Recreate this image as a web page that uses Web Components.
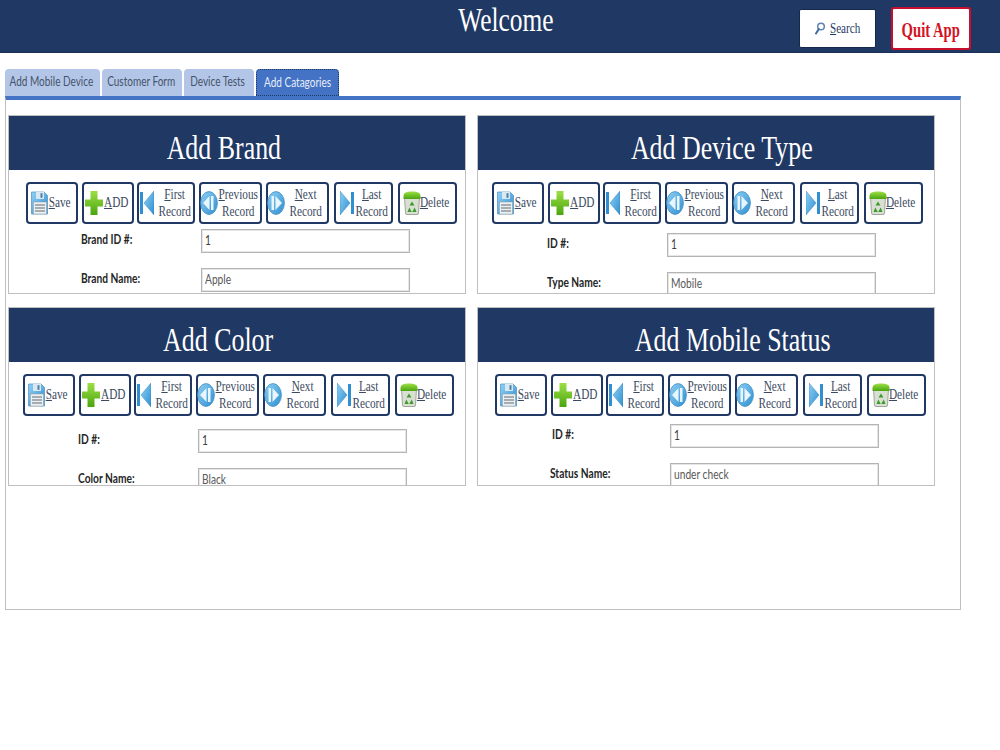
<!DOCTYPE html>
<html>
<head>
<meta charset="utf-8">
<title>Welcome</title>
<style>
  html, body { margin: 0; background: #fff; }
</style>
</head>
<body>
<app-shell>
  <app-header slot="header" heading="Welcome"></app-header>
  <tab-strip slot="tabs">
    <tab-item size="95">Add Mobile Device</tab-item>
    <tab-item size="80">Customer Form</tab-item>
    <tab-item size="70">Device Tests</tab-item>
    <tab-item size="83" active>Add Catagories</tab-item>
  </tab-strip>
  <record-card heading="Add Brand" shift="-13" row-left="18" gap="5">
    <form-field left="73" label="Brand ID #:" value="1" strong></form-field>
    <form-field left="73" label="Brand Name:" value="Apple"></form-field>
  </record-card>
  <record-card heading="Add Device Type" shift="16" row-left="15" gap="9">
    <form-field left="70" label="ID #:" value="1" strong></form-field>
    <form-field left="70" label="Type Name:" value="Mobile"></form-field>
  </record-card>
  <record-card heading="Add Color" shift="-19" row-left="15" gap="13">
    <form-field left="70" label="ID #:" value="1" strong></form-field>
    <form-field left="70" label="Color Name:" value="Black"></form-field>
  </record-card>
  <record-card heading="Add Mobile Status" shift="27" row-left="18" gap="8">
    <form-field left="75" label="ID #:" value="1" strong></form-field>
    <form-field left="73" label="Status Name:" value="under check"></form-field>
  </record-card>
</app-shell>

<script>
const DEFS = `<svg width="0" height="0" style="position:absolute"><defs>
    <linearGradient id="sky" x1="0" y1="0" x2="1" y2="1"><stop offset="0" stop-color="#8fd0f5"/><stop offset="1" stop-color="#2f8fd0"/></linearGradient>
    <linearGradient id="leaf" x1="0" y1="0" x2="0" y2="1"><stop offset="0" stop-color="#9ddf45"/><stop offset="1" stop-color="#4aa510"/></linearGradient>
  </defs></svg>`;

const ICONS = {
  save: `<svg width="17" height="24" viewBox="0 0 17 24">
      ${DEFS}
      <path d="M.5 1h12.500l3.500 3.500V23H.5z" fill="url(#sky)" stroke="#4f8fbe" stroke-width=".7"/>
      <rect x="5" y="1" width="8" height="7" fill="#dbe8f2"/>
      <rect x="9.500" y="2.200" width="2" height="4.600" fill="#4d7fa8"/>
      <rect x="2.500" y="11" width="13" height="12" fill="#edf0f2" stroke="#8d99a3" stroke-width=".5"/>
      <path d="M4 14h10M4 17h10M4 20h10" stroke="#5f6a75" stroke-width="1.100"/>
    </svg>`,
  add: `<svg width="18" height="24" viewBox="0 0 18 24">
      ${DEFS}
      <path d="M5.500 0h7v8.500H18v7h-5.500V24h-7v-8.500H0v-7h5.500z" fill="url(#leaf)"/>
    </svg>`,
  first: `<svg width="14" height="24" viewBox="0 0 14 24">
      ${DEFS}
      <rect x="0" y="1" width="3" height="22" fill="#2f8fd0"/>
      <path d="M14 0v24L4 12z" fill="url(#sky)" stroke="#2f86c0" stroke-width=".5"/>
    </svg>`,
  last: `<svg width="14" height="24" viewBox="0 0 14 24">
      ${DEFS}
      <path d="M0 0v24l10-12z" fill="url(#sky)" stroke="#2f86c0" stroke-width=".5"/>
      <rect x="11" y="1" width="3" height="22" fill="#2f8fd0"/>
    </svg>`,
  prev: `<svg width="18" height="24" viewBox="0 0 18 24">
      ${DEFS}
      <ellipse cx="9" cy="12" rx="8.400" ry="11.400" fill="url(#sky)" stroke="#3e8fc7" stroke-width=".8"/>
      <rect x="11" y="5" width="2.500" height="14" fill="#e8f5fc"/>
      <path d="M9.500 5v14L3 12z" fill="#e8f5fc"/>
    </svg>`,
  next: `<svg width="18" height="24" viewBox="0 0 18 24">
      ${DEFS}
      <ellipse cx="9" cy="12" rx="8.400" ry="11.400" fill="url(#sky)" stroke="#3e8fc7" stroke-width=".8"/>
      <rect x="4.500" y="5" width="2.500" height="14" fill="#e8f5fc"/>
      <path d="M8.500 5v14L15 12z" fill="#e8f5fc"/>
    </svg>`,
  trash: `<svg width="18" height="24" viewBox="0 0 18 24">
      ${DEFS}
      <path d="M1.500 6h15L15.500 22a1.500 1.500 0 0 1-1.500 1.500H4A1.500 1.500 0 0 1 2.500 22z" fill="#d9dfd2" stroke="#7d8876" stroke-width=".7"/>
      <path d="M.5 5C.5 1.500 4 .5 9 .5s8.500 1 8.500 4.500v3H.5z" fill="url(#leaf)"/>
      <path d="M9 10.500l-2.500 4h5zM4.500 21l1.800-4.500 2.500 4.500zM13.500 21l-1.800-4.500-2.500 4.500z" fill="#3f9a2c"/>
    </svg>`
};

const BUTTONS = [
  { icon: 'save',  top: 'Save',     width: 52, before: 0, iconAt: 5, iconW: 17, textAt: 34 },
  { icon: 'add',   top: 'ADD',      width: 52, before: 4, iconAt: 3, iconW: 18, textAt: 34 },
  { icon: 'first', top: 'First',    bottom: 'Record', width: 58, before: 3, iconAt: 3, iconW: 14, textAt: 38 },
  { icon: 'prev',  top: 'Previous', bottom: 'Record', width: 63, before: 4, iconAt: 1, iconW: 18, textAt: 39 },
  { icon: 'next',  top: 'Next',     bottom: 'Record', width: 63, before: 4, iconAt: 1, iconW: 18, textAt: 40 },
  { icon: 'last',  top: 'Last',     bottom: 'Record', width: 59, before: 5, iconAt: 6, iconW: 14, textAt: 38 },
  { icon: 'trash', top: 'Delete',   width: 59, before: 5, iconAt: 5, iconW: 18, textAt: 37 }
];

class AppShell extends HTMLElement {
  constructor() {
    super();
    this.attachShadow({ mode: 'open' });
    this.shadowRoot.innerHTML = `
      <style>
        :host { display: block; width: 1000px; height: 750px; overflow: hidden; }
        .tabs { margin: 16px 0 0 5px; }
        .panel {
          margin-left: 5px;
          width: 956px;
          height: 514px;
          box-sizing: border-box;
          border: 1px solid #bfbfbf;
          border-top: 4px solid #4472c4;
          padding: 15px 0 0 2px;
          display: grid;
          grid-template-columns: 458px 458px;
          grid-auto-rows: 179px;
          column-gap: 11px;
          row-gap: 13px;
          align-content: start;
        }
      </style>
      <slot name="header"></slot>
      <div class="tabs"><slot name="tabs"></slot></div>
      <div class="panel"><slot></slot></div>
    `;
  }
}

class AppHeader extends HTMLElement {
  constructor() {
    super();
    this.attachShadow({ mode: 'open' });
    this.shadowRoot.innerHTML = `
      <style>
        :host {
          display: grid;
          grid-template-columns: 784px 77px 80px;
          column-gap: 15px;
          height: 53px;
          box-sizing: border-box;
          background: #1f3864;
          border-bottom: 1px solid #1a2f55;
          font-family: "Liberation Serif", serif;
        }
        h1 {
          margin: 0;
          padding-left: 228px;
          text-align: center;
          font-weight: normal;
          font-size: 33px;
          line-height: 40px;
          color: #fff;
          white-space: nowrap;
        }
        h1 span { display: inline-block; transform: scaleX(.77); }
        .search {
          margin-top: 9px;
          height: 39px;
          box-sizing: border-box;
          background: #fff;
          border: 1px solid #16294b;
          border-radius: 2px;
          display: flex;
          align-items: center;
          padding-left: 15px;
          font-size: 15px;
          color: #1f3864;
        }
        .search svg { flex: none; }
        .search span { display: inline-block; transform: scaleX(.74); transform-origin: left center; margin-left: 5px; white-space: nowrap; }
        .quit {
          margin-top: 7px;
          height: 43px;
          box-sizing: border-box;
          background: #fff;
          border: 2px solid #c8102e;
          border-radius: 3px;
          padding-top: 3px;
          display: flex;
          align-items: center;
          justify-content: center;
          font-size: 21px;
          font-weight: bold;
          color: #d2141f;
          white-space: nowrap;
          overflow: hidden;
        }
        .quit span { display: inline-block; transform: scaleX(.7); flex: none; }
      </style>
      <h1><span>${this.getAttribute('heading')}</span></h1>
      <div class="search">
        <svg width="10" height="13" viewBox="0 0 10 13">
          <circle cx="6" cy="4.500" r="3.300" fill="none" stroke="#5f84b3" stroke-width="1.500"/>
          <path d="M3.800 7L1 11.500" stroke="#41699c" stroke-width="2" stroke-linecap="round"/>
        </svg>
        <span><u>S</u>earch</span>
      </div>
      <div class="quit"><span>Quit App</span></div>
    `;
  }
}

class TabStrip extends HTMLElement {
  constructor() {
    super();
    this.attachShadow({ mode: 'open' });
    this.shadowRoot.innerHTML = `
      <style>
        :host { display: flex; gap: 2px; height: 27px; }
      </style>
      <slot></slot>
    `;
  }
}

class TabItem extends HTMLElement {
  constructor() {
    super();
    this.attachShadow({ mode: 'open' });
    this.shadowRoot.innerHTML = `
      <style>
        :host {
          display: flex;
          justify-content: center;
          box-sizing: border-box;
          flex: none;
          width: ${this.getAttribute('size')}px;
          height: 27px;
          padding-right: 2px;
          background: #b4c6e7;
          border-radius: 4px 4px 0 0;
          font-family: Lato, sans-serif;
          font-size: 13px;
          line-height: 25px;
          color: #44546a;
          white-space: nowrap;
        }
        :host([active]) {
          background: #4472c4;
          color: #e6edf8;
          border: 1px dotted #1f3864;
          padding-right: 0;
        }
        span { display: inline-block; flex: none; transform: scaleX(.77); }
      </style>
      <span><slot></slot></span>
    `;
  }
}

class RecordCard extends HTMLElement {
  constructor() {
    super();
    this.attachShadow({ mode: 'open' });
    const shift = Number(this.getAttribute('shift'));
    const pad = shift > 0 ? `padding-left:${shift * 2}px` : `padding-right:${-shift * 2}px`;
    this.shadowRoot.innerHTML = `
      <style>
        :host {
          display: block;
          box-sizing: border-box;
          height: 179px;
          border: 1px solid #bfbfbf;
          overflow: hidden;
          background: #fff;
        }
        h2 {
          margin: 0;
          height: 54px;
          background: #1f3864;
          color: #fff;
          text-align: center;
          font-family: "Liberation Serif", serif;
          font-weight: normal;
          font-size: 33px;
          line-height: 65px;
          white-space: nowrap;
          overflow: hidden;
        }
        h2 span { display: inline-block; transform: scaleX(.785); line-height: 65px; }
        record-toolbar { margin: 12px 0 0 ${Number(this.getAttribute('row-left')) - 1}px; }
        .fields {
          margin-top: ${this.getAttribute('gap')}px;
          display: flex;
          flex-direction: column;
          gap: 15px;
        }
      </style>
      <h2 style="${pad}"><span>${this.getAttribute('heading')}</span></h2>
      <record-toolbar></record-toolbar>
      <div class="fields"><slot></slot></div>
    `;
  }
}

class RecordToolbar extends HTMLElement {
  constructor() {
    super();
    this.attachShadow({ mode: 'open' });
    const items = BUTTONS.map((b, i) => `<nav-button index="${i}"></nav-button>`).join('');
    this.shadowRoot.innerHTML = `
      <style>
        :host { display: flex; height: 42px; }
      </style>
      ${items}
    `;
  }
}

class NavButton extends HTMLElement {
  constructor() {
    super();
    this.attachShadow({ mode: 'open' });
    const b = BUTTONS[Number(this.getAttribute('index'))];
    const key = `<u>${b.top[0]}</u>${b.top.slice(1)}`;
    const lines = b.bottom ? `${key}<br>${b.bottom}` : key;
    const room = 2 * (b.textAt - b.iconAt - b.iconW);
    this.shadowRoot.innerHTML = `
      <style>
        :host {
          display: grid;
          grid-template-columns: ${b.iconAt}px ${b.iconW}px ${room}px;
          align-items: center;
          box-sizing: border-box;
          flex: none;
          width: ${b.width}px;
          height: 42px;
          margin-left: ${b.before}px;
          background: #fff;
          border-radius: 4px;
          box-shadow: inset 0 0 0 2px #1f3864;
          font-family: "Liberation Serif", serif;
          font-size: 15px;
          line-height: 17px;
          color: #3b4a60;
        }
        .icon { grid-column: 2; display: flex; }
        .text {
          grid-column: 3;
          justify-self: center;
          text-align: center;
          white-space: nowrap;
          margin-top: -1px;
          transform: scaleX(.75);
        }
      </style>
      <div class="icon">${ICONS[b.icon]}</div>
      <div class="text">${lines}</div>
    `;
  }
}

class FormField extends HTMLElement {
  constructor() {
    super();
    this.attachShadow({ mode: 'open' });
    const left = Number(this.getAttribute('left'));
    const inputAt = this.closest('record-card').getAttribute('row-left') === '18' ? 193 : 190;
    this.shadowRoot.innerHTML = `
      <style>
        :host {
          display: grid;
          grid-template-columns: ${inputAt - left}px 209px;
          padding-left: ${left - 1}px;
          height: 24px;
          font-family: Lato, sans-serif;
          font-size: 13px;
        }
        .label { font-weight: bold; color: #262626; line-height: 20px; white-space: nowrap; }
        .value {
          box-sizing: border-box;
          height: 24px;
          border: 1px solid #b4b4b4;
          box-shadow: inset 0 0 0 1px #e6e6e6;
          padding-left: 3px;
          line-height: 21px;
          color: ${this.hasAttribute('strong') ? '#404040' : '#595959'};
          background: #fff;
          white-space: nowrap;
        }
        span { display: inline-block; transform: scaleX(.785); transform-origin: left center; }
      </style>
      <div class="label"><span>${this.getAttribute('label')}</span></div>
      <div class="value"><span>${this.getAttribute('value')}</span></div>
    `;
  }
}

customElements.define('nav-button', NavButton);
customElements.define('record-toolbar', RecordToolbar);
customElements.define('form-field', FormField);
customElements.define('record-card', RecordCard);
customElements.define('tab-item', TabItem);
customElements.define('tab-strip', TabStrip);
customElements.define('app-header', AppHeader);
customElements.define('app-shell', AppShell);
</script>
</body>
</html>
